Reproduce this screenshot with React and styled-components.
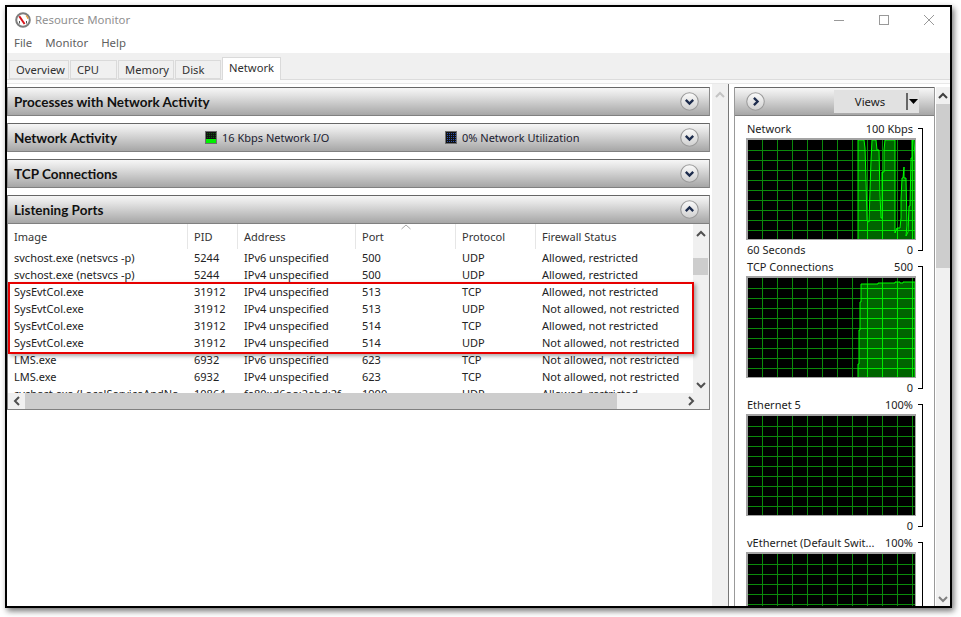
import styled, { createGlobalStyle } from "styled-components";

const GlobalStyle = createGlobalStyle`
  html, body {
    margin: 0;
    padding: 0;
    background: #fff;
  }
  body {
    font-family: "Noto Sans", "Open Sans", "Liberation Sans", sans-serif;
    font-size: 11px;
    color: #222;
  }
`;

const Page = styled.div`
  width: 961px;
  height: 617px;
  padding: 5px 0 0 5px;
  box-sizing: border-box;
  overflow: hidden;
`;

const Frame = styled.div`
  width: 947px;
  height: 603px;
  box-sizing: border-box;
  border: 2px solid #000;
  box-shadow: 2px 3px 6px rgba(0, 0, 0, 0.55);
  background: #fff;
  display: flex;
  flex-direction: column;
  overflow: hidden;
`;

const TitleBar = styled.div`
  height: 25px;
  flex: none;
  display: flex;
  align-items: center;
  padding: 0 16px 0 8px;
  color: #8f8f8f;
  font-size: 11.4px;
`;

const TitleText = styled.span`
  margin-left: 4px;
  flex: 1;
`;

const WindowControls = styled.div`
  display: flex;
  align-items: center;
  gap: 35px;
`;

const MenuBar = styled.div`
  height: 21px;
  flex: none;
  display: flex;
  align-items: center;
  gap: 13px;
  padding-left: 7px;
  color: #606060;
  font-size: 11.4px;
`;

const TabStrip = styled.div`
  height: 27px;
  flex: none;
  box-sizing: border-box;
  background: #f0f0f0;
  border-bottom: 1px solid #dcdcdc;
  display: flex;
  align-items: flex-end;
  gap: 1px;
  padding-left: 2px;
`;

const Tab = styled.div`
  width: ${(p) => p.$width}px;
  height: ${(p) => (p.$active ? 23 : 19)}px;
  box-sizing: border-box;
  margin-bottom: ${(p) => (p.$active ? -1 : 0)}px;
  padding: ${(p) => (p.$active ? "2px 0 0 6px" : "1px 0 0 6px")};
  border: 1px solid #dadada;
  border-bottom: ${(p) => (p.$active ? "none" : "1px solid #dadada")};
  background: ${(p) => (p.$active ? "#fff" : "#f0f0f0")};
  color: #303030;
  font-size: 11.2px;
  line-height: 16px;
`;

const Band = styled.div`
  height: 3px;
  flex: none;
  background: #fbfbfb;
  border-bottom: 1px solid #e8e8e8;
`;

const Main = styled.div`
  flex: 1;
  min-height: 0;
  display: flex;
`;

const LeftPane = styled.div`
  width: 703px;
  flex: none;
  display: flex;
  flex-direction: column;
  gap: 7px;
  padding-top: 3px;
`;

const Header = styled.div`
  height: 29px;
  flex: none;
  box-sizing: border-box;
  display: flex;
  align-items: center;
  padding: 0 10px 0 6px;
  border: 1px solid #8c8c8c;
  border-top-color: #666;
  border-bottom-color: #808080;
  background: linear-gradient(#f6f6f6, #e4e4e4 25%, #a6a6a6);
`;

const SectionTitle = styled.div`
  min-width: ${(p) => p.$width || 0}px;
  font-family: Lato, "Noto Sans", sans-serif;
  font-weight: 700;
  font-size: 13.5px;
  color: #111;
`;

const Legend = styled.div`
  width: ${(p) => p.$width}px;
  flex: none;
  display: flex;
  align-items: center;
  gap: 5px;
  color: #1c1c30;
`;

const Swatch = styled.span`
  width: 12px;
  height: 13px;
  box-sizing: border-box;
  border: 1px solid #6f6f6f;
  background-color: ${(p) => p.$color};
  background-image:
    linear-gradient(to top, ${(p) => p.$fill} 4px, transparent 4px),
    repeating-linear-gradient(to right, #111 0 1px, transparent 1px 2px),
    repeating-linear-gradient(to bottom, #111 0 1px, transparent 1px 2px);
`;

const HeaderEnd = styled.div`
  margin-left: auto;
  display: flex;
`;

const ListBox = styled.div`
  position: relative;
  height: 186px;
  box-sizing: border-box;
  margin-top: -7px;
  border: 1px solid #808080;
  border-top: none;
  display: grid;
  grid-template-columns: 685px 16px;
  grid-template-rows: 169px 16px;
`;

const TableArea = styled.div`
  overflow: hidden;
`;

const Row = styled.div`
  display: grid;
  grid-template-columns: 180px 50px 118px 100px 80px 157px;
  height: 17px;
  line-height: 17px;
  white-space: nowrap;
`;

const HeadRow = styled(Row)`
  height: 25px;
  line-height: 26px;
  color: #333;
  position: relative;
`;

const Cell = styled.div`
  padding-left: 6px;
  overflow: hidden;
`;

const HeadCell = styled(Cell)`
  border-right: 1px solid #e6e6e6;
  &:last-of-type {
    border-right: none;
  }
`;

const SortCaret = styled.svg`
  position: absolute;
  left: 393px;
  top: 0;
`;

const VTrack = styled.div`
  background: #f0f0f0;
  display: flex;
  flex-direction: column;
  align-items: center;
  padding-top: 6px;
`;

const VThumb = styled.div`
  align-self: stretch;
  height: 17px;
  margin: 20px 1px 0 0;
  background: #cdcdcd;
`;

const VArrowEnd = styled.div`
  margin-top: auto;
  padding-bottom: 4px;
`;

const HTrack = styled.div`
  grid-column: 1 / 3;
  background: #f0f0f0;
  display: flex;
  align-items: center;
`;

const HArrow = styled.div`
  width: 17px;
  display: flex;
  justify-content: center;
  flex: none;
`;

const HThumb = styled.div`
  width: 592px;
  height: 100%;
  background: #cdcdcd;
`;

const HArrowEnd = styled(HArrow)`
  margin-left: auto;
  margin-right: 10px;
`;

const Highlight = styled.div`
  position: absolute;
  left: 0;
  top: 58px;
  width: 686px;
  height: 72px;
  box-sizing: border-box;
  border: 2px solid #e60000;
  box-shadow: 2px 2px 4px rgba(0, 0, 0, 0.35);
  pointer-events: none;
`;

const PaneScroll = styled.div`
  width: 16px;
  flex: none;
  margin-left: 2px;
  background: #f0f0f0;
  display: flex;
  justify-content: center;
  padding-top: 7px;
  box-sizing: border-box;
`;

const Splitter = styled.div`
  width: 1px;
  flex: none;
  margin-right: 5px;
  background: #777;
`;

const RightPanel = styled.div`
  width: 201px;
  flex: none;
  margin-top: 3px;
  box-sizing: border-box;
  border-left: 1px solid #999;
  border-right: 1px solid #999;
  display: flex;
  flex-direction: column;
  overflow: hidden;
`;

const PanelHeader = styled(Header)`
  margin: 0 -1px;
  padding: 0 15px 0 11px;
  justify-content: space-between;
`;

const ViewsButton = styled.div`
  width: 85px;
  height: 23px;
  box-sizing: border-box;
  background: #e1e1e1;
  display: flex;
  align-items: center;
  color: #222;
  font-size: 11.4px;
`;

const ViewsLabel = styled.span`
  flex: 1;
  text-align: center;
`;

const ViewsDrop = styled.span`
  width: 13px;
  height: 17px;
  border-left: 2px solid #666;
  display: flex;
  align-items: center;
  justify-content: center;
  box-sizing: border-box;
`;

const GraphList = styled.div`
  padding: 4px 0 0 11px;
`;

const GraphBlock = styled.div`
  display: flex;
  height: 138px;
`;

const GraphBody = styled.div`
  width: 170px;
  flex: none;
`;

const LabelRow = styled.div`
  height: 18px;
  line-height: 18px;
  display: flex;
  justify-content: space-between;
  padding: 0 3px 0 1px;
  white-space: nowrap;
  color: #1c1c1c;
`;

const FootRow = styled(LabelRow)`
  line-height: 20px;
`;

const GraphBox = styled.div`
  height: 102px;
  box-sizing: border-box;
  border: 2px solid #a3a3a3;
  border-right-width: 1px;
  border-bottom-width: 1px;
  background: #000;
  svg {
    display: block;
  }
`;

const Bracket = styled.div`
  width: 5px;
  margin: 8px 0 7px 2px;
  box-sizing: border-box;
  border: 1px solid #000;
  border-left: none;
`;

const OuterScroll = styled.div`
  width: 14px;
  flex: none;
  margin: 3px 0 0 1px;
  background: #f0f0f0;
  display: flex;
  flex-direction: column;
  align-items: center;
  padding-top: 5px;
  box-sizing: border-box;
`;

const OuterThumb = styled.div`
  align-self: stretch;
  height: 164px;
  margin-top: 4px;
  background: #cdcdcd;
`;

const OuterArrowEnd = styled.div`
  margin-top: auto;
  padding-bottom: 3px;
`;

// --- drawings ---

function AppIcon() {
  return (
    <svg width="16" height="16" viewBox="0 0 16 16">
      <circle cx="8" cy="8" r="6.8" fill="#fff" stroke="#7d7d7d" strokeWidth="2" />
      <path d="M11 3.5 A5.4 5.4 0 0 1 13 7" fill="none" stroke="#e8a33c" strokeWidth="1.2" />
      <path d="M4.3 4.2 L9.6 12" stroke="#d8121a" strokeWidth="2" fill="none" />
      <path d="M4.5 11.5 L4.5 9 M11.5 11.5 L11.5 9" stroke="#555" strokeWidth="1" />
    </svg>
  );
}

function MinimizeIcon() {
  return (
    <svg width="10" height="10" viewBox="0 0 10 10">
      <path d="M0 5.5 H10" stroke="#999" strokeWidth="1" />
    </svg>
  );
}

function MaximizeIcon() {
  return (
    <svg width="10" height="10" viewBox="0 0 10 10">
      <rect x="0.5" y="0.5" width="9" height="9" fill="none" stroke="#999" />
    </svg>
  );
}

function CloseIcon() {
  return (
    <svg width="10" height="10" viewBox="0 0 10 10">
      <path d="M0 0 L10 10 M10 0 L0 10" stroke="#999" strokeWidth="1" />
    </svg>
  );
}

const roundPaths = {
  down: "M5.5 7.5 L9 11 L12.5 7.5",
  up: "M5.5 10.5 L9 7 L12.5 10.5",
  right: "M7.5 5.5 L11 9 L7.5 12.5",
};

function RoundButton({ dir, id }) {
  return (
    <svg width="19" height="19" viewBox="0 0 18 18">
      <defs>
        <linearGradient id={id} x1="0" y1="0" x2="0" y2="1">
          <stop offset="0" stopColor="#fbfbfb" />
          <stop offset="1" stopColor="#cfcfcf" />
        </linearGradient>
      </defs>
      <circle cx="9" cy="9" r="8.3" fill={`url(#${id})`} stroke="#9a9a9a" />
      <path d={roundPaths[dir]} fill="none" stroke="#1d2c4d" strokeWidth="2.2" />
    </svg>
  );
}

const arrowPaths = {
  up: "M1 6 L5 2 L9 6",
  down: "M1 2 L5 6 L9 2",
  left: "M6 1 L2 5 L6 9",
  right: "M2 1 L6 5 L2 9",
};

function ScrollArrow({ dir, color = "#505050" }) {
  const flat = dir === "up" || dir === "down";
  return (
    <svg
      width={flat ? 10 : 8}
      height={flat ? 8 : 10}
      viewBox={flat ? "0 0 10 8" : "0 0 8 10"}
      style={{ display: "block" }}
    >
      <path d={arrowPaths[dir]} fill="none" stroke={color} strokeWidth="2" />
    </svg>
  );
}

const verticals = Array.from({ length: 11 }, (_, i) => 14.5 + i * 15);
const horizontals = Array.from({ length: 9 }, (_, i) => 10.5 + i * 10);

function GridLines({ color }) {
  return (
    <g stroke={color} strokeWidth="1">
      {verticals.map((x) => (
        <line key={`v${x}`} x1={x} y1="0" x2={x} y2="99" />
      ))}
      {horizontals.map((y) => (
        <line key={`h${y}`} x1="0" y1={y} x2="167" y2={y} />
      ))}
    </g>
  );
}

function Graph({ id, points }) {
  const line = points && points.map((p) => p.join(",")).join(" ");
  return (
    <svg width="167" height="99" viewBox="0 0 167 99">
      <rect width="167" height="99" fill="#000" />
      <GridLines color="#0b8a0b" />
      {points && (
        <>
          <defs>
            <clipPath id={id}>
              <polygon points={line} />
            </clipPath>
          </defs>
          <polygon points={line} fill="#006400" />
          <g clipPath={`url(#${id})`}>
            <GridLines color="#00e800" />
          </g>
          <polyline points={line} fill="none" stroke="#00ff00" strokeWidth="1" />
        </>
      )}
    </svg>
  );
}

// --- data ---

const networkPoints = [
  [110, 99], [110, 0], [116, 0], [117, 8], [118, 40], [119, 81], [121, 82],
  [122, 50], [123, 20], [124, 0], [128, 0], [129, 10], [131, 10], [132, 55],
  [133, 78], [134, 78], [134, 32], [136, 32], [136, 10], [137, 0], [147, 0],
  [147, 93], [148, 90], [149, 88], [152, 88], [153, 78], [153, 59], [154, 38],
  [155, 38], [156, 27], [156, 38], [158, 38], [159, 85], [158, 96], [160, 92],
  [161, 66], [162, 66], [163, 18], [164, 18], [164, 0], [166, 0], [167, 18],
  [167, 99],
];

const tcpPoints = [
  [110, 99], [110, 86], [111, 86], [111, 52], [112, 52], [112, 24], [113, 24],
  [113, 6], [115, 6], [130, 6], [130, 5], [147, 5], [147, 4], [152, 4], [152, 5],
  [155, 5], [155, 4], [167, 4], [167, 99],
];

const sv = "svchost.exe (netsvcs -p)";
const sys = "SysEvtCol.exe";
const v4 = "IPv4 unspecified";
const v6 = "IPv6 unspecified";
const ar = "Allowed, restricted";
const an = "Allowed, not restricted";
const nn = "Not allowed, not restricted";

const rows = [
  [sv, "5244", v6, "500", "UDP", ar],
  [sv, "5244", v4, "500", "UDP", ar],
  [sys, "31912", v4, "513", "TCP", an],
  [sys, "31912", v4, "513", "UDP", nn],
  [sys, "31912", v4, "514", "TCP", an],
  [sys, "31912", v4, "514", "UDP", nn],
  ["LMS.exe", "6932", v6, "623", "TCP", nn],
  ["LMS.exe", "6932", v4, "623", "TCP", nn],
  ["svchost.exe (LocalServiceAndNo", "10864", "fe80::d6oo:2ebd:2f", "1900", "UDP", ar],
];

const columns = ["Image", "PID", "Address", "Port", "Protocol", "Firewall Status"];

const graphs = [
  { id: "net", name: "Network", max: "100 Kbps", left: "60 Seconds", points: networkPoints },
  { id: "tcp", name: "TCP Connections", max: "500", left: "", points: tcpPoints },
  { id: "eth", name: "Ethernet 5", max: "100%", left: "" },
  { id: "veth", name: "vEthernet (Default Swit...", max: "100%", left: "" },
];

function App() {
  return (
    <Page>
      <GlobalStyle />
      <Frame>
        <TitleBar>
          <AppIcon />
          <TitleText>Resource Monitor</TitleText>
          <WindowControls>
            <MinimizeIcon />
            <MaximizeIcon />
            <CloseIcon />
          </WindowControls>
        </TitleBar>
        <MenuBar>
          <span>File</span>
          <span>Monitor</span>
          <span>Help</span>
        </MenuBar>
        <TabStrip>
          <Tab $width={60}>Overview</Tab>
          <Tab $width={47}>CPU</Tab>
          <Tab $width={56}>Memory</Tab>
          <Tab $width={46}>Disk</Tab>
          <Tab $width={59} $active>
            Network
          </Tab>
        </TabStrip>
        <Band />
        <Main>
          <LeftPane>
            <Header>
              <SectionTitle>Processes with Network Activity</SectionTitle>
              <HeaderEnd>
                <RoundButton dir="down" id="rb1" />
              </HeaderEnd>
            </Header>
            <Header>
              <SectionTitle $width={191}>Network Activity</SectionTitle>
              <Legend $width={240}>
                <Swatch $color="#0c5c0c" $fill="#00f000" />
                16 Kbps Network I/O
              </Legend>
              <Legend $width={200}>
                <Swatch $color="#2a50b0" $fill="transparent" />
                0% Network Utilization
              </Legend>
              <HeaderEnd>
                <RoundButton dir="down" id="rb2" />
              </HeaderEnd>
            </Header>
            <Header>
              <SectionTitle>TCP Connections</SectionTitle>
              <HeaderEnd>
                <RoundButton dir="down" id="rb3" />
              </HeaderEnd>
            </Header>
            <Header>
              <SectionTitle>Listening Ports</SectionTitle>
              <HeaderEnd>
                <RoundButton dir="up" id="rb4" />
              </HeaderEnd>
            </Header>
            <ListBox>
              <TableArea>
                <HeadRow>
                  {columns.map((c) => (
                    <HeadCell key={c}>{c}</HeadCell>
                  ))}
                  <SortCaret width="10" height="6" viewBox="0 0 10 6">
                    <path d="M0.5 5 L5 1 L9.5 5" fill="none" stroke="#a8a8a8" strokeWidth="1" />
                  </SortCaret>
                </HeadRow>
                {rows.map((r, i) => (
                  <Row key={i}>
                    {r.map((v, j) => (
                      <Cell key={j}>{v}</Cell>
                    ))}
                  </Row>
                ))}
              </TableArea>
              <VTrack>
                <ScrollArrow dir="up" />
                <VThumb />
                <VArrowEnd>
                  <ScrollArrow dir="down" />
                </VArrowEnd>
              </VTrack>
              <HTrack>
                <HArrow>
                  <ScrollArrow dir="left" />
                </HArrow>
                <HThumb />
                <HArrowEnd>
                  <ScrollArrow dir="right" />
                </HArrowEnd>
              </HTrack>
              <Highlight />
            </ListBox>
          </LeftPane>
          <PaneScroll>
            <ScrollArrow dir="up" color="#c4c4c4" />
          </PaneScroll>
          <Splitter />
          <RightPanel>
            <PanelHeader>
              <RoundButton dir="right" id="rb5" />
              <ViewsButton>
                <ViewsLabel>Views</ViewsLabel>
                <ViewsDrop>
                  <svg width="9" height="5" viewBox="0 0 9 5">
                    <path d="M0 0 H9 L4.5 5 Z" fill="#000" />
                  </svg>
                </ViewsDrop>
              </ViewsButton>
            </PanelHeader>
            <GraphList>
              {graphs.map((g) => (
                <GraphBlock key={g.id}>
                  <GraphBody>
                    <LabelRow>
                      <span>{g.name}</span>
                      <span>{g.max}</span>
                    </LabelRow>
                    <GraphBox>
                      <Graph id={g.id} points={g.points} />
                    </GraphBox>
                    <FootRow>
                      <span>{g.left}</span>
                      <span>0</span>
                    </FootRow>
                  </GraphBody>
                  <Bracket />
                </GraphBlock>
              ))}
            </GraphList>
          </RightPanel>
          <OuterScroll>
            <ScrollArrow dir="up" color="#404040" />
            <OuterThumb />
            <OuterArrowEnd>
              <ScrollArrow dir="down" color="#808080" />
            </OuterArrowEnd>
          </OuterScroll>
        </Main>
      </Frame>
    </Page>
  );
}

export default App;
